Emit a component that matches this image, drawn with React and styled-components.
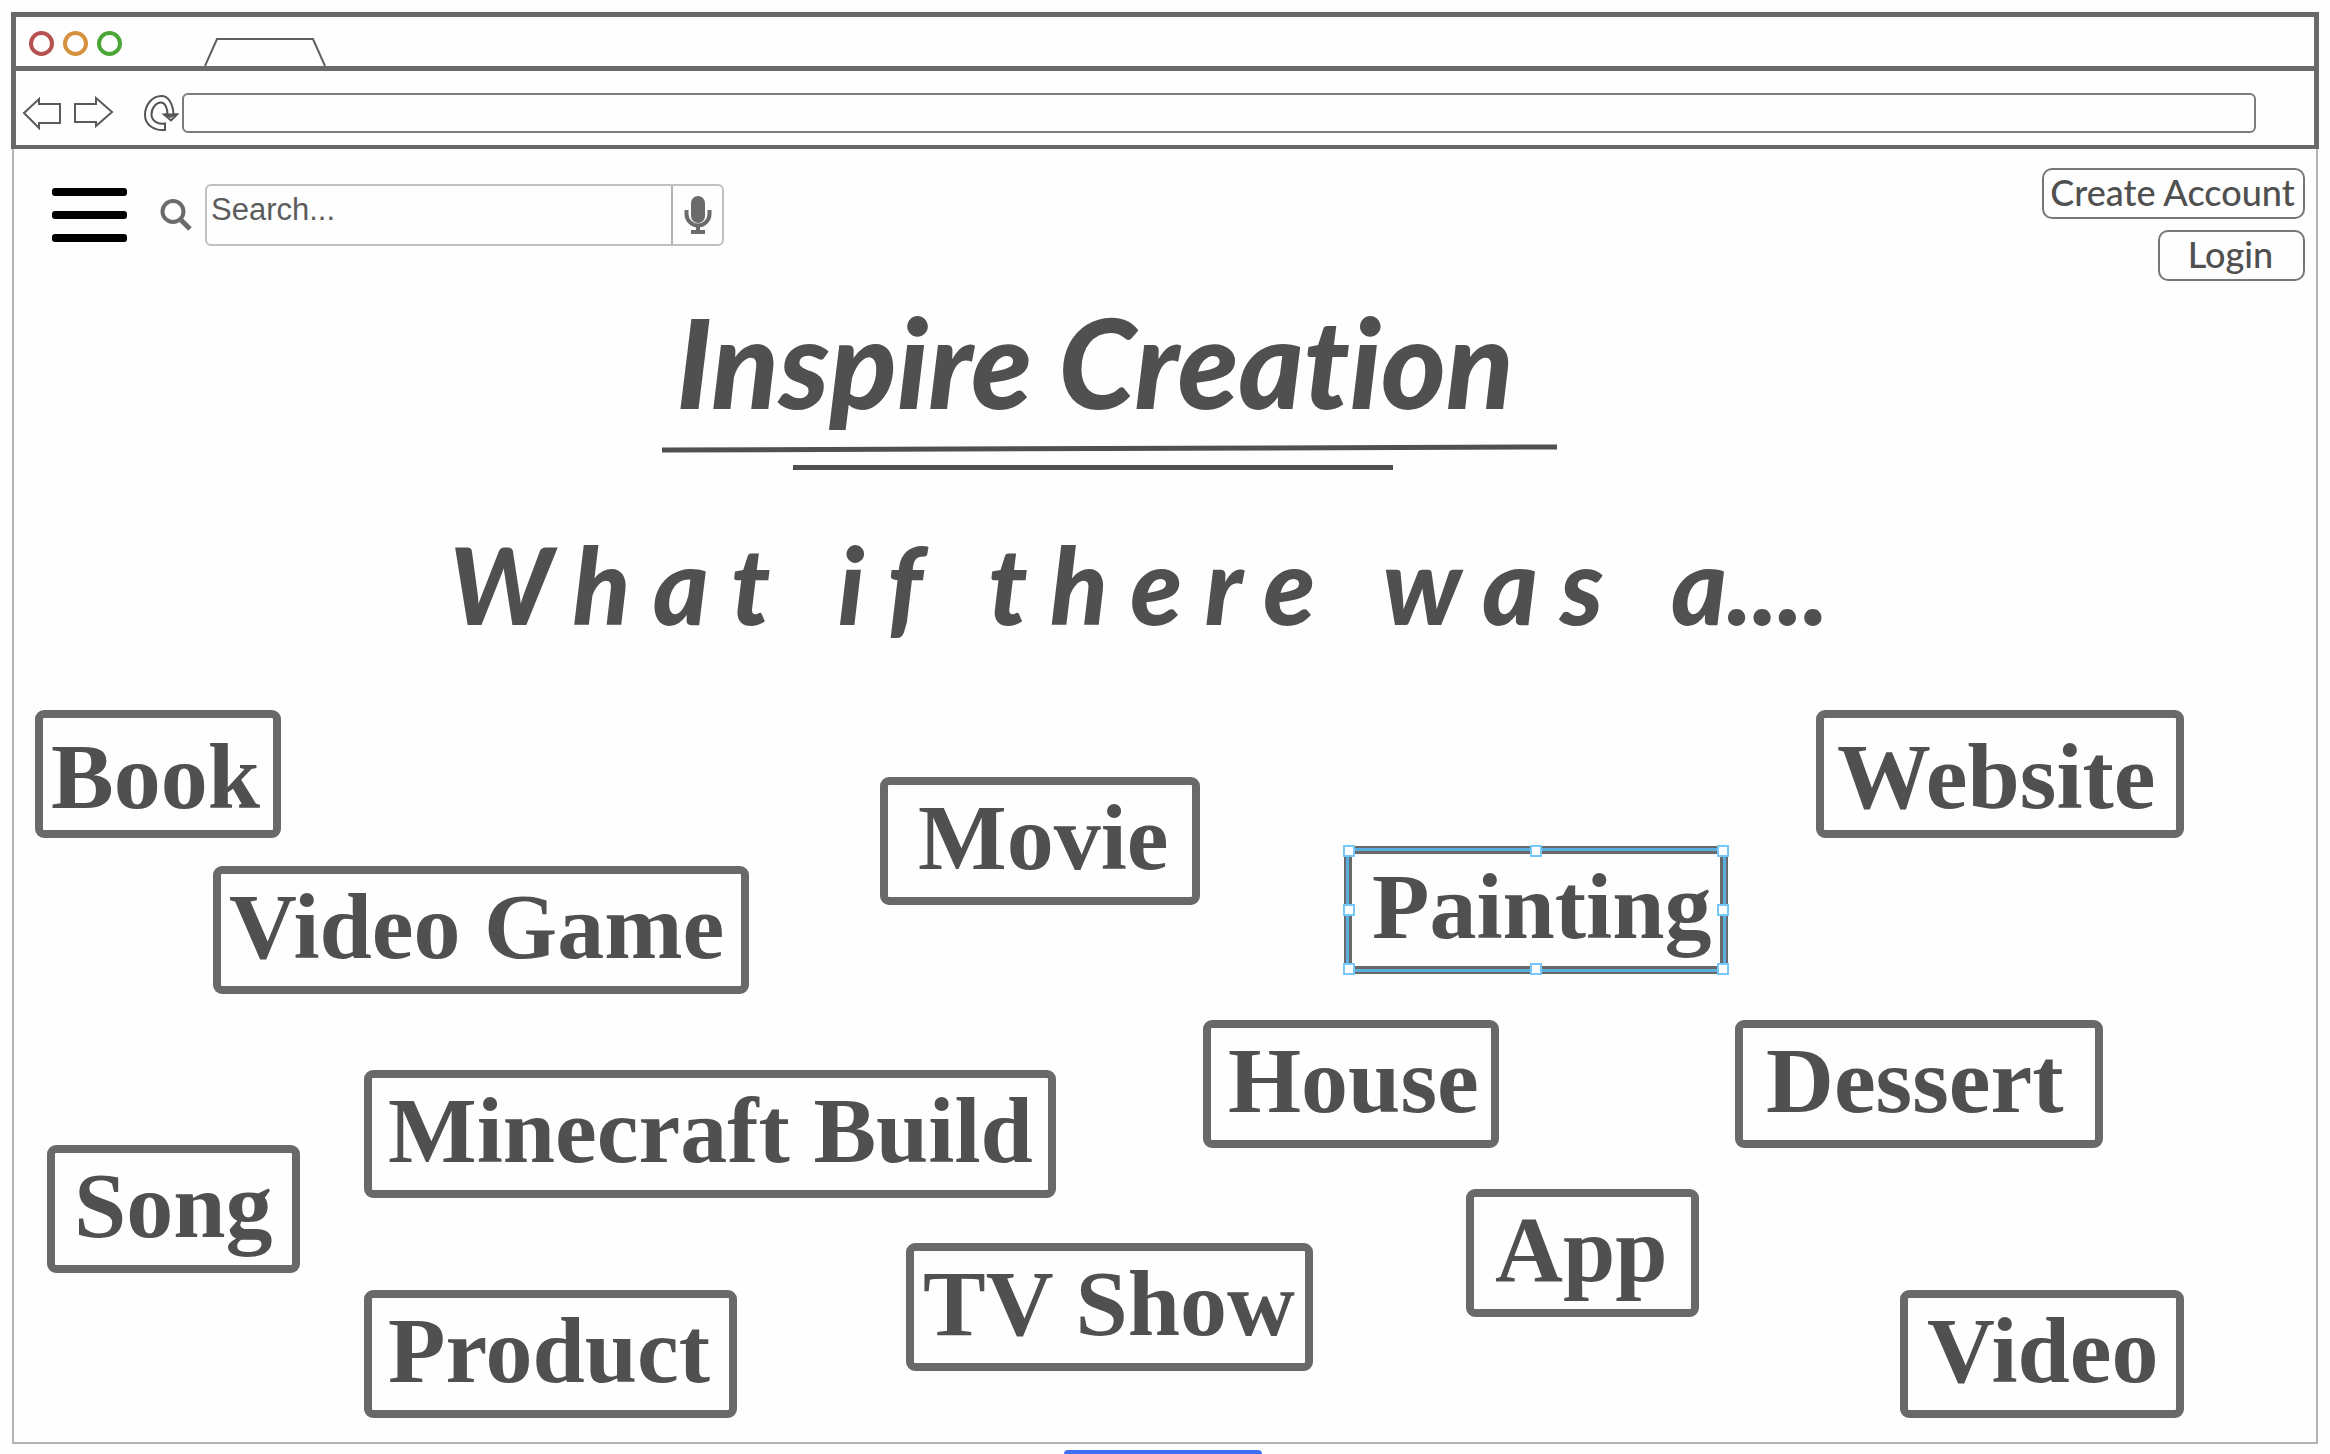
import React from "react";
import styled, { createGlobalStyle } from "styled-components";

const ink = "#505050";
const line = "#696969";

const GlobalStyle = createGlobalStyle`
  *, *::before, *::after { box-sizing: border-box; }
  body { margin: 0; background: #fefefe; color: ${ink}; }
  button, input { font: inherit; color: inherit; }
`;

const Page = styled.div`
  display: flex;
  flex-direction: column;
  min-height: 100vh;
  padding: 12px 11px 0;
  font-family: "Liberation Sans", Arial, sans-serif;
`;

const Chrome = styled.header`
  border: 5px solid ${line};
  border-bottom-width: 4px;
`;

const TabBar = styled.div`
  display: flex;
  align-items: flex-end;
  height: 54px;
  padding-left: 13px;
  border-bottom: 5px solid ${line};
`;

const Lights = styled.div`
  display: flex;
  gap: 9px;
  align-self: center;
  margin-right: 82px;
  padding-top: 4px;
`;

const Light = styled.span`
  width: 25px;
  height: 25px;
  border: 4px solid ${(p) => p.$color};
  border-radius: 50%;
`;

const NavBar = styled.div`
  display: flex;
  align-items: center;
  height: 74px;
  padding: 10px 58px 0 6px;
`;

const IconButton = styled.button`
  display: flex;
  padding: 0;
  border: 0;
  background: none;
  margin-right: ${(p) => p.$gap || 0}px;
`;

const Address = styled.input`
  flex: 1;
  min-width: 0;
  height: 40px;
  padding: 0 12px;
  border: 2px solid #7c7c7c;
  border-radius: 6px;
  background: none;
  font-size: 24px;
`;

const Content = styled.main`
  display: flex;
  flex: 1;
  flex-direction: column;
  margin: 0 1px 6px;
  border: 2px solid #b4b4b4;
  border-top: 0;
`;

const Toolbar = styled.div`
  display: flex;
  align-items: flex-start;
  justify-content: space-between;
  padding: 19px 11px 0 38px;
`;

const SearchGroup = styled.form`
  display: flex;
  align-items: center;
  padding-top: 16px;
`;

const MenuButton = styled.button`
  display: flex;
  flex-direction: column;
  justify-content: space-between;
  width: 75px;
  height: 54px;
  margin-right: 32px;
  padding: 0;
  border: 0;
  background: none;
`;

const Bar = styled.span`
  height: 8px;
  border-radius: 3px;
  background: #000;
`;

const SearchLabel = styled.label`
  display: flex;
  margin-right: 10px;
`;

const SearchBox = styled.div`
  display: flex;
  height: 62px;
  border: 2px solid #c0c0c0;
  border-radius: 6px;
`;

const SearchInput = styled.input`
  width: 464px;
  padding: 0 4px 10px;
  border: 0;
  background: none;
  font-size: 31px;
  &::placeholder { color: #5c5c5c; opacity: 1; }
`;

const MicButton = styled.button`
  display: flex;
  align-items: center;
  justify-content: center;
  width: 51px;
  padding: 0;
  border: 0;
  border-left: 2px solid #b2b2b2;
  background: none;
`;

const Account = styled.nav`
  display: flex;
  flex-direction: column;
  align-items: flex-end;
  gap: 11px;
`;

const AccountButton = styled.button`
  width: ${(p) => p.$width}px;
  height: 51px;
  padding: 0 2px 3px 0;
  border: 2px solid #777;
  border-radius: 10px;
  background: none;
  font-family: Lato, sans-serif;
  font-size: 36px;
  font-weight: 500;
  line-height: 44px;
  white-space: nowrap;
`;

const Hero = styled.section`
  display: flex;
  flex-direction: column;
  align-items: center;
  padding: 7px 52px 0 0;
  font-family: Lato, sans-serif;
  font-style: italic;
  font-weight: 900;
  font-variant-ligatures: none;
`;

const Title = styled.h1`
  margin: 0;
  padding-right: 88px;
  font-size: 124px;
  font-weight: inherit;
  line-height: 146px;
  white-space: nowrap;
`;

const Underline = styled.svg`
  margin: 6px 58px 52px 0;
`;

const Subtitle = styled.h2`
  margin: 0;
  font-size: 106px;
  font-weight: inherit;
  line-height: 120px;
  white-space: pre;
`;

const Board = styled.section`
  position: relative;
  flex: 1;
  min-height: 780px;
  margin-top: 16px;
`;

const Idea = styled.button`
  position: absolute;
  left: ${(p) => p.$x}px;
  top: ${(p) => p.$y}px;
  display: flex;
  align-items: flex-start;
  width: ${(p) => p.$width}px;
  height: 128px;
  padding: ${(p) => (p.$low ? 6 : 0)}px 0 0 ${(p) => p.$inset}px;
  border: 8px solid ${line};
  border-radius: 9px;
  background: none;
  font-family: "Liberation Serif", "Times New Roman", serif;
  font-size: 94px;
  font-weight: 700;
  line-height: 104px;
  white-space: nowrap;
`;

const Selection = styled.span`
  position: absolute;
  inset: -6px;
  border: 3px solid #58aede;
`;

const Handle = styled.span`
  position: absolute;
  left: ${(p) => p.$x}%;
  top: ${(p) => p.$y}%;
  width: 12px;
  height: 12px;
  margin: -6px 0 0 -6px;
  border: 2px solid #76c8fb;
  background: #fff;
`;

const BottomTab = styled.footer`
  width: 198px;
  height: 4px;
  margin-right: 4px;
  align-self: center;
  border-radius: 6px 6px 0 0;
  background: #416ff4;
`;

const lights = ["#b5514e", "#d6913e", "#4ba636"];

const ideas = [
  { name: "Book", x: 21, y: 50, width: 246, inset: 8, low: true },
  { name: "Video Game", x: 199, y: 206, width: 536, inset: 8 },
  { name: "Movie", x: 866, y: 117, width: 320, inset: 30 },
  { name: "Painting", x: 1330, y: 186, width: 384, inset: 20, selected: true },
  { name: "Website", x: 1802, y: 50, width: 368, inset: 13, low: true },
  { name: "House", x: 1189, y: 360, width: 296, inset: 17 },
  { name: "Dessert", x: 1721, y: 360, width: 368, inset: 23 },
  { name: "Minecraft Build", x: 350, y: 410, width: 692, inset: 16 },
  { name: "Song", x: 33, y: 485, width: 253, inset: 19 },
  { name: "App", x: 1452, y: 529, width: 233, inset: 21 },
  { name: "TV Show", x: 892, y: 583, width: 407, inset: 9 },
  { name: "Product", x: 350, y: 630, width: 373, inset: 16 },
  { name: "Video", x: 1886, y: 630, width: 284, inset: 19 },
];

const handles = [[0, 0], [50, 0], [100, 0], [0, 50], [100, 50], [0, 100], [50, 100], [100, 100]];

function Arrow({ flip }) {
  return (
    <svg width="42" height="34" viewBox="0 0 42 34" fill="none" stroke="#5a5a5a" strokeWidth="2">
      <path d={flip
        ? "M2 8H23V2L39 16L23 30V26H2Z"
        : "M2 17L17 3V8H38V27H17V32Z"} />
    </svg>
  );
}

export default function App() {
  return (
    <>
      <GlobalStyle />
      <Page>
        <Chrome>
          <TabBar>
            <Lights>
              {lights.map((c) => <Light key={c} $color={c} />)}
            </Lights>
            <svg width="122" height="29" viewBox="0 0 122 29" fill="none" stroke="#5f5f5f" strokeWidth="2">
              <path d="M1 29L13 2H109L121 29" />
            </svg>
          </TabBar>
          <NavBar>
            <IconButton aria-label="Back" $gap={9}><Arrow /></IconButton>
            <IconButton aria-label="Forward" $gap={28}><Arrow flip /></IconButton>
            <IconButton aria-label="Reload" $gap={3}>
              <svg width="36" height="38" viewBox="0 0 36 38" fill="none" stroke="#555" strokeWidth="2">
                <path d="M22 36V29.500C14 31 8.500 26 8.500 20.500C8.500 14 13 8.500 18 8.500C22 8.500 24.500 14 24.500 20.500H21L28 26.500L34 20.500H30.500C30 9 25 2 18.500 2C9 2 2 11 2 21C2 30 10 37 22 36Z" />
                <path d="M22 20.500H32L27.500 23Z" />
              </svg>
            </IconButton>
            <Address type="text" aria-label="Address" />
          </NavBar>
        </Chrome>

        <Content>
          <Toolbar>
            <SearchGroup onSubmit={(e) => e.preventDefault()}>
              <MenuButton type="button" aria-label="Menu">
                <Bar /><Bar /><Bar />
              </MenuButton>
              <SearchLabel htmlFor="search" aria-label="Search">
                <svg width="36" height="36" viewBox="0 0 36 36" fill="none" stroke="#6b6b6b">
                  <circle cx="14" cy="14.500" r="10.500" strokeWidth="4" />
                  <path d="M22 23L31 32" strokeWidth="5" />
                </svg>
              </SearchLabel>
              <SearchBox>
                <SearchInput id="search" type="text" placeholder="Search..." />
                <MicButton type="button" aria-label="Voice search">
                  <svg width="28" height="40" viewBox="0 0 28 40" fill="none" stroke="#6b6b6b">
                    <rect x="7" y="1" width="14" height="27" rx="7" fill="#6b6b6b" stroke="none" />
                    <path d="M2.500 15V19A11.500 11.500 0 0 0 25.500 19V15" strokeWidth="4" />
                    <path d="M14 31V37M7 37H21" strokeWidth="4" />
                  </svg>
                </MicButton>
              </SearchBox>
            </SearchGroup>
            <Account>
              <AccountButton type="button" $width={263}>Create Account</AccountButton>
              <AccountButton type="button" $width={147}>Login</AccountButton>
            </Account>
          </Toolbar>

          <Hero>
            <Title>Inspire Creation</Title>
            <Underline width="896" height="32" viewBox="0 0 896 32" stroke={ink} strokeWidth="5">
              <path d="M0 10L895 7M131 27.500H731" />
            </Underline>
            <Subtitle>{"W h a t   i f   t h e r e   w a s   a...."}</Subtitle>
          </Hero>

          <Board>
            {ideas.map((i) => (
              <Idea key={i.name} type="button" $x={i.x} $y={i.y} $width={i.width} $inset={i.inset} $low={i.low}>
                {i.name}
                {i.selected && (
                  <Selection>
                    {handles.map(([x, y]) => <Handle key={`${x}-${y}`} $x={x} $y={y} />)}
                  </Selection>
                )}
              </Idea>
            ))}
          </Board>
        </Content>
        <BottomTab />
      </Page>
    </>
  );
}
